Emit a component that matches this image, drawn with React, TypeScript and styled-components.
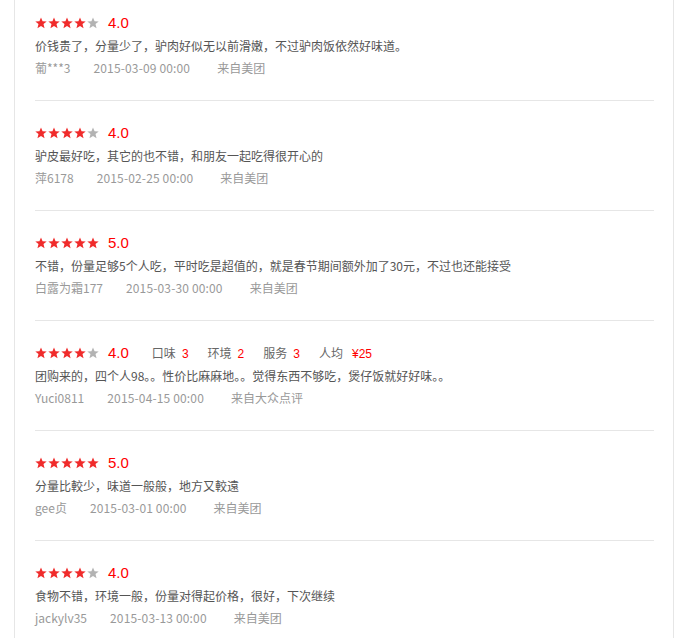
import React from "react";
import styled, { createGlobalStyle } from "styled-components";

const Global = createGlobalStyle`
  html, body { margin: 0; padding: 0; background: #fff; }
  body { font-family: "Noto Sans CJK SC", "Liberation Sans", sans-serif; overflow: hidden; }
`;

const Panel = styled.div`
  box-sizing: border-box;
  width: 660px;
  margin-left: 14px;
  border-left: 1px solid #e6e6e6;
  border-right: 1px solid #e6e6e6;
  padding: 0 19px 0 20px;
`;

const List = styled.ul`
  list-style: none;
  margin: -9px 0 0 0;
  padding: 0;
`;

const Item = styled.li`
  padding: 19px 0 21px;
  border-bottom: 1px solid #e6e6e6;
`;

const RatingRow = styled.div`
  display: flex;
  align-items: center;
  height: 25px;
`;

const Stars = styled.span`
  display: flex;
  gap: 1px;
  margin-right: 9px;
`;

const Score = styled.span`
  font-family: "Liberation Sans", sans-serif;
  font-size: 15px;
  color: #f00;
  margin-right: 4px;
`;

const Sub = styled.span`
  font-size: 12px;
  color: #666;
  margin-left: 19px;
  &:first-of-type { margin-left: 20px; }
`;

const SubValue = styled.span<{ $wide?: boolean }>`
  font-family: "Liberation Sans", sans-serif;
  color: #f00;
  margin-left: ${(p) => (p.$wide ? "9px" : "6px")};
`;

const Text = styled.p`
  margin: 0;
  font-size: 12px;
  line-height: 22px;
  color: #555;
`;

const Meta = styled.div`
  display: flex;
  font-size: 12px;
  line-height: 22px;
  color: #999;
`;

const MetaPart = styled.span`
  margin-right: 23px;
`;

const MetaDate = styled.span`
  margin-right: 27px;
  letter-spacing: 0.15px;
`;

const Star: React.FC<{ on: boolean }> = ({ on }) => (
  <svg width="12" height="12" viewBox="0 0 12 12">
    <polygon
      points="6,0.4 7.55,4.2 11.7,4.45 8.5,7.1 9.55,11.3 6,9 2.45,11.3 3.5,7.1 0.3,4.45 4.45,4.2"
      fill={on ? "#f02b2b" : "#b3b3b3"}
    />
  </svg>
);

type Review = {
  stars: number;
  text: string;
  user: string;
  date: string;
  source: string;
  sub?: { label: string; value: string }[];
};

const reviews: Review[] = [
  { stars: 4, text: "价钱贵了，分量少了，驴肉好似无以前滑嫩，不过驴肉饭依然好味道。", user: "葡***3", date: "2015-03-09 00:00", source: "来自美团" },
  { stars: 4, text: "驴皮最好吃，其它的也不错，和朋友一起吃得很开心的", user: "萍6178", date: "2015-02-25 00:00", source: "来自美团" },
  { stars: 5, text: "不错，份量足够5个人吃，平时吃是超值的，就是春节期间额外加了30元，不过也还能接受", user: "白露为霜177", date: "2015-03-30 00:00", source: "来自美团" },
  {
    stars: 4,
    text: "团购来的，四个人98。。性价比麻麻地。。觉得东西不够吃，煲仔饭就好好味。。",
    user: "Yuci0811",
    date: "2015-04-15 00:00",
    source: "来自大众点评",
    sub: [
      { label: "口味", value: "3" },
      { label: "环境", value: "2" },
      { label: "服务", value: "3" },
      { label: "人均", value: "¥25" },
    ],
  },
  { stars: 5, text: "分量比較少，味道一般般，地方又較遠", user: "gee贞", date: "2015-03-01 00:00", source: "来自美团" },
  { stars: 4, text: "食物不错，环境一般，份量对得起价格，很好，下次继续", user: "jackylv35", date: "2015-03-13 00:00", source: "来自美团" },
];

export default function App() {
  return (
    <>
      <Global />
      <Panel>
        <List>
          {reviews.map((r, i) => (
            <Item key={i}>
              <RatingRow>
                <Stars>
                  {[0, 1, 2, 3, 4].map((k) => (
                    <Star key={k} on={k < r.stars} />
                  ))}
                </Stars>
                <Score>{r.stars.toFixed(1)}</Score>
                {r.sub?.map((s) => (
                  <Sub key={s.label}>
                    {s.label}
                    <SubValue $wide={s.value.startsWith("¥")}>{s.value}</SubValue>
                  </Sub>
                ))}
              </RatingRow>
              <Text>{r.text}</Text>
              <Meta>
                <MetaPart>{r.user}</MetaPart>
                <MetaDate>{r.date}</MetaDate>
                <MetaPart>{r.source}</MetaPart>
              </Meta>
            </Item>
          ))}
        </List>
      </Panel>
    </>
  );
}
